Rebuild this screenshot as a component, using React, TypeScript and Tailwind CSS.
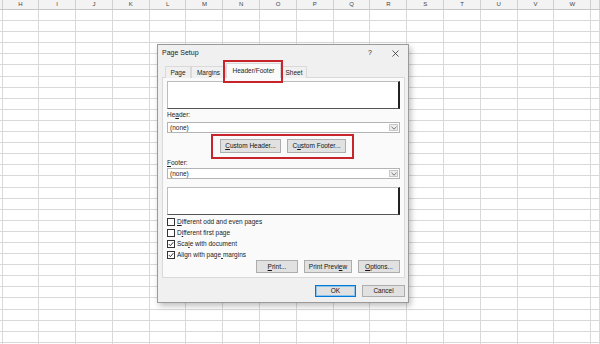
import React from "react";

const COLS = ["", "H", "I", "J", "K", "L", "M", "N", "O", "P", "Q", "R", "S", "T", "U", "V", "W", ""];
const ROWS = Array.from({ length: 31 }, (_, i) => i);

const font = { fontFamily: '"Liberation Sans", Arial, sans-serif' };

// underline the access-key letter like Win32 dialogs do
function Label({ text, k }: { text: string; k: number }) {
  return (
    <span>
      {text.slice(0, k)}
      <span className="underline underline-offset-1">{text[k]}</span>
      {text.slice(k + 1)}
    </span>
  );
}

function Btn({ w, children, primary }: { w: string; children: React.ReactNode; primary?: boolean }) {
  return (
    <div
      className={`${w} flex items-center justify-center bg-[#e1e1e1] text-[6.5px] text-[#111] ${
        primary ? "border border-[#0078d7] shadow-[inset_0_0_0_1px_#8fc3ea]" : "border border-[#adadad]"
      }`}
    >
      {children}
    </div>
  );
}

function Combo() {
  return (
    <div className="flex h-[11px] items-stretch border border-[#b4b4b4] bg-white">
      <div className="flex flex-1 items-center pl-[2px] text-[6.5px] text-[#222]">(none)</div>
      <div className="my-[1px] mr-[1px] flex w-[9px] items-center justify-center border border-[#c8c8c8] bg-[#ececec]">
        <svg width="6" height="4" viewBox="0 0 6 4">
          <polyline points="0.5,0.8 3,3.2 5.5,0.8" fill="none" stroke="#555" strokeWidth="0.8" />
        </svg>
      </div>
    </div>
  );
}

function Preview() {
  return <div className="h-[28px] border-t border-l border-[#bdbdbd] border-r-2 border-r-[#222] border-b border-b-[#555] bg-white" />;
}

function Check({ checked, children }: { checked?: boolean; children: React.ReactNode }) {
  return (
    <div className="flex h-[11px] items-center gap-[2px] text-[6.5px] text-[#1a1a1a]">
      <div className="flex h-[8px] w-[8px] items-center justify-center border border-[#333] bg-white">
        {checked && (
          <svg width="6" height="6" viewBox="0 0 6 6">
            <polyline points="0.8,3 2.4,4.7 5.3,1.2" fill="none" stroke="#222" strokeWidth="0.9" />
          </svg>
        )}
      </div>
      {children}
    </div>
  );
}

function Tab({ w, children }: { w: string; children: React.ReactNode }) {
  return (
    <div className={`${w} flex h-[12px] items-center justify-center border border-b-0 border-[#d9d9d9] bg-[#f0f0f0] text-[6.5px] text-[#222]`}>
      {children}
    </div>
  );
}

export default function App() {
  return (
    <div className="relative h-[344px] w-[600px] overflow-hidden bg-white" style={font}>
      {/* sheet grid */}
      <div className="grid h-[10px] grid-cols-[2.5px_repeat(16,36.8px)_1fr] border-b border-[#c6c6c6] bg-[#f3f3f3]">
        {COLS.map((c, i) => (
          <div key={i} className="flex items-center justify-center border-r border-[#d0d0d0] text-[6px] text-[#444]">
            {c}
          </div>
        ))}
      </div>
      {ROWS.map((r) => (
        <div key={r} className="grid h-[11.1px] grid-cols-[2.5px_repeat(16,36.8px)_1fr]">
          {COLS.map((_, i) => (
            <div key={i} className="border-r border-b border-[#d9d9d9]" />
          ))}
        </div>
      ))}

      {/* Page Setup dialog */}
      <div className="absolute left-[157px] top-[44px] flex h-[259px] w-[252px] flex-col border border-[#9a9a9a] bg-[#f0f0f0] shadow-[2px_3px_6px_rgba(0,0,0,0.25)]">
        <div className="flex h-[17px] items-center justify-between pl-[4px] pr-[9px] text-[7px] text-[#222]">
          <span>Page Setup</span>
          <div className="flex items-center gap-[20px]">
            <span className="text-[7px]">?</span>
            <svg width="7" height="7" viewBox="0 0 7 7">
              <path d="M0.5 0.5 L6.5 6.5 M6.5 0.5 L0.5 6.5" stroke="#333" strokeWidth="0.8" />
            </svg>
          </div>
        </div>

        <div className="relative z-10 flex h-[16px] items-end pl-[7px] -mb-[1px]">
          <Tab w="w-[26px]">Page</Tab>
          <Tab w="w-[35px]">Margins</Tab>
          <div className="relative flex h-[15px] w-[55px] items-center justify-center border border-b-0 border-[#d9d9d9] bg-[#fafafa] text-[6.5px] text-[#222]">
            Header/Footer
            <span className="absolute -left-[4px] -right-[3px] -top-[4px] -bottom-[5px] border-2 border-[#c8242b]" />
          </div>
          <Tab w="w-[26px]">Sheet</Tab>
        </div>

        <div className="ml-[4px] flex h-[201px] w-[243px] flex-col border border-[#d9d9d9] bg-[#fafafa] px-[4px] pt-[3px] text-[#222]">
          <Preview />
          <div className="mt-[2px] flex h-[8px] items-center text-[6.5px]">
            <Label text="Header:" k={2} />
          </div>
          <div className="mt-[3px]">
            <Combo />
          </div>
          <div className="ml-[44px] mt-[1px] flex w-fit gap-[6px] border-2 border-[#c8242b] pb-[4px] pl-[7px] pr-[6px] pt-[3px]">
            <Btn w="w-[61px] h-[14px]">
              <Label text="Custom Header..." k={0} />
            </Btn>
            <Btn w="w-[59px] h-[14px]">
              <Label text="Custom Footer..." k={1} />
            </Btn>
          </div>
          <div className="flex h-[8px] items-center text-[6.5px]">
            <Label text="Footer:" k={0} />
          </div>
          <div className="mt-[1px]">
            <Combo />
          </div>
          <div className="mt-[8px]">
            <Preview />
          </div>
          <div className="mt-[1px] flex flex-col">
            <Check>
              <Label text="Different odd and even pages" k={0} />
            </Check>
            <Check>
              <Label text="Different first page" k={1} />
            </Check>
            <Check checked>
              <Label text="Scale with document" k={3} />
            </Check>
            <Check checked>
              <Label text="Align with page margins" k={15} />
            </Check>
          </div>
          <div className="flex justify-end gap-[6px]">
            <Btn w="w-[42px] h-[13px]">
              <Label text="Print..." k={0} />
            </Btn>
            <Btn w="w-[48px] h-[13px]">
              <Label text="Print Preview" k={11} />
            </Btn>
            <Btn w="w-[42px] h-[13px]">
              <Label text="Options..." k={0} />
            </Btn>
          </div>
        </div>

        <div className="mt-[7px] flex justify-end gap-[6px] pr-[3px]">
          <Btn w="w-[41px] h-[12px]" primary>
            OK
          </Btn>
          <Btn w="w-[43px] h-[12px]">Cancel</Btn>
        </div>
      </div>
    </div>
  );
}
